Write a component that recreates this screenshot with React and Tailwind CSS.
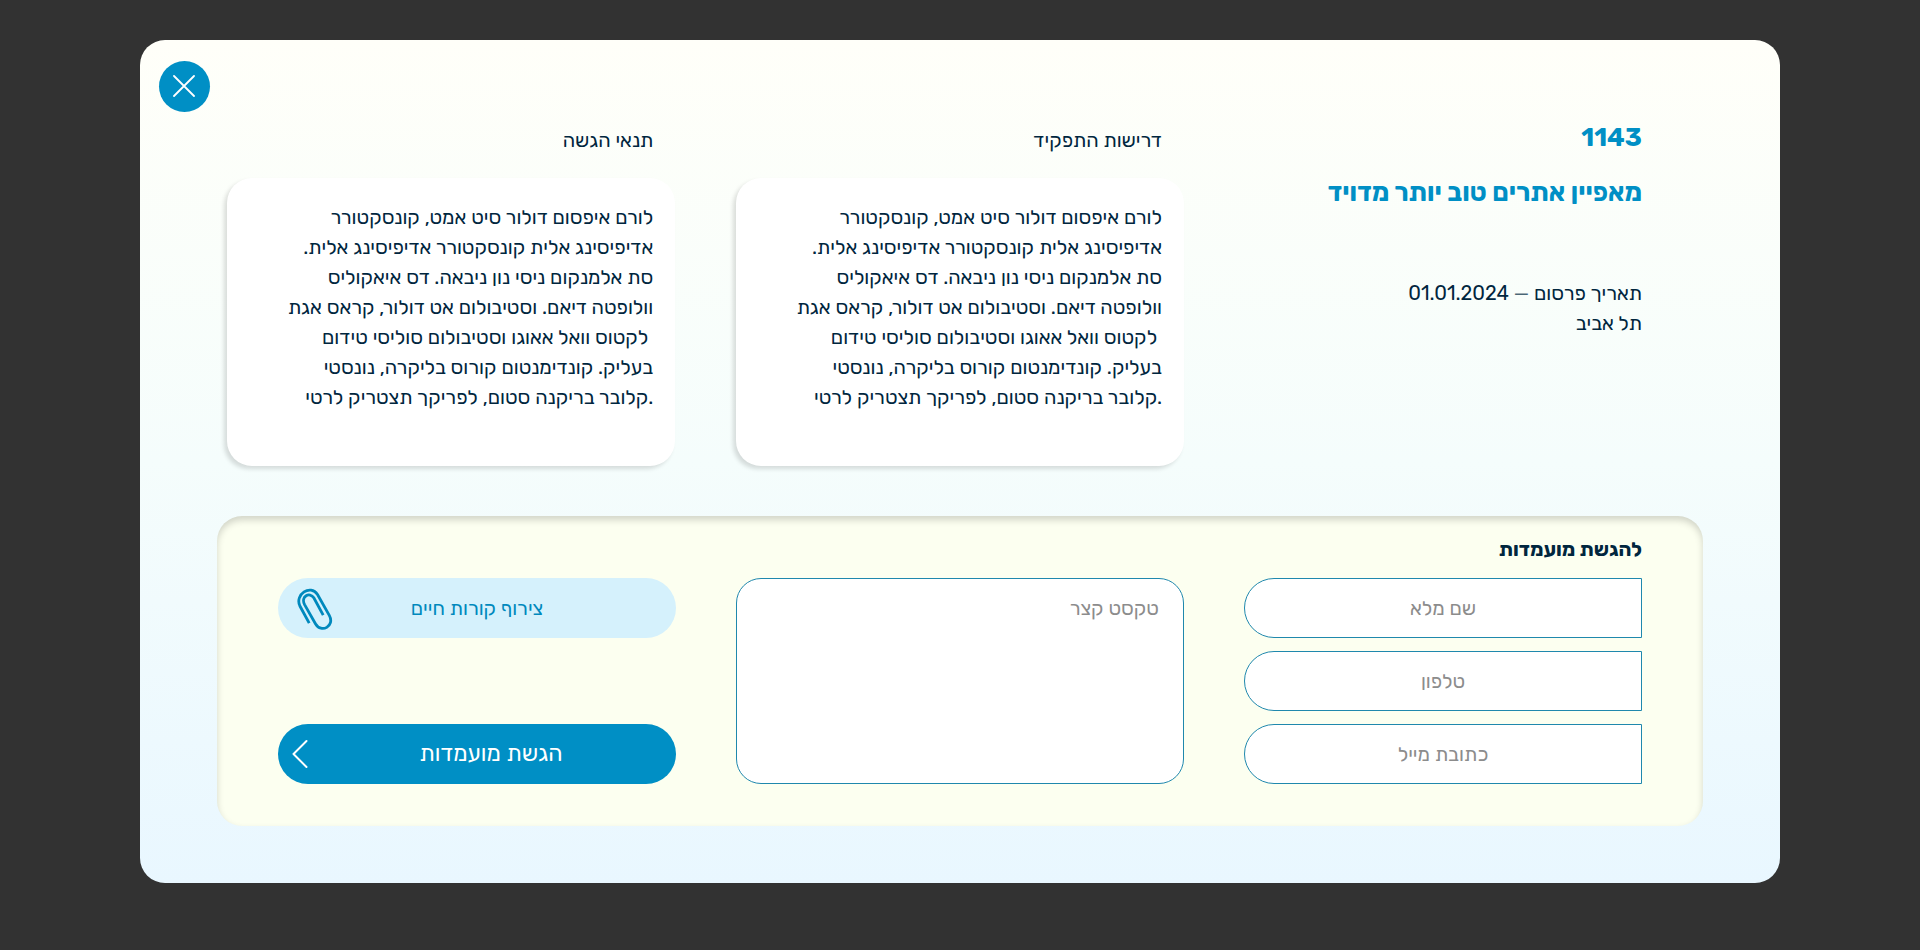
import React from 'react';

const bodyLines = [
  'לורם איפסום דולור סיט אמט, קונסקטורר',
  'אדיפיסינג אלית קונסקטורר אדיפיסינג אלית.',
  'סת אלמנקום ניסי נון ניבאה. דס איאקוליס',
  'וולופטה דיאם. וסטיבולום אט דולור, קראס אגת',
  '\u00a0לקטוס וואל אאוגו וסטיבולום סוליסי טידום',
  'בעליק. קונדימנטום קורוס בליקרה, נונסטי',
  '.קלובר בריקנה סטום, לפריקך תצטריק לרטי',
];

function InfoColumn({ title }) {
  return (
    <section className="flex w-[448px] flex-col">
      <h3 className="mb-[23px] h-[30px] pr-[22px] leading-[30px]">{title}</h3>
      <div className="h-[288px] rounded-[25px] bg-white pr-[22px] pt-[24px] leading-[30px] shadow-[-3px_3px_4px_#00000022]">
        {bodyLines.map((line) => (
          <p key={line} className="whitespace-nowrap">{line}</p>
        ))}
      </div>
    </section>
  );
}

function Field({ placeholder }) {
  return (
    <input
      type="text"
      placeholder={placeholder}
      className="h-[60px] w-full rounded-l-[30px] border border-[#1f88ad] bg-white text-center outline-none placeholder:text-[#8c8c8c]"
    />
  );
}

function CloseIcon() {
  return (
    <svg width="22" height="22" viewBox="0 0 22 22" fill="none" stroke="#fff" strokeWidth="1.8" strokeLinecap="round">
      <path d="M1 1L21 21M21 1L1 21" />
    </svg>
  );
}

function ChevronIcon() {
  return (
    <svg width="16" height="30" viewBox="0 0 16 30" fill="none" stroke="#fff" strokeWidth="2" strokeLinecap="round" strokeLinejoin="round">
      <path d="M14.5 2L1.5 15L14.5 28" />
    </svg>
  );
}

function ClipIcon() {
  return (
    <svg width="36" height="42" viewBox="0 0 36 42" fill="none" stroke="#0089bd" strokeWidth="2.8">
      <path d="M12.2 35.2L2.9 18C-2.6 6.5 13.6 -4.2 20.5 6.5L32.3 27.4C38.2 38.2 24.2 45.6 18.6 36L7.6 16.6C3.4 8.4 12.8 3.4 16.8 9.8L26.2 27.2" />
    </svg>
  );
}

export default function App() {
  return (
    <div dir="rtl" className="h-[950px] w-full bg-[#323232] pt-[40px] font-['Rubik','Open_Sans',sans-serif] text-[20px] text-[#00263e]">
      <main className="relative mx-auto flex h-[843px] w-[1640px] flex-col rounded-[25px] bg-linear-to-b from-[#fffff9] via-[#f5fdfc] to-[#e9f7ff]">
        <button aria-label="סגירה" className="absolute left-[19.4px] top-[21.4px] flex size-[50.2px] items-center justify-center rounded-full bg-[#008fc5]">
          <CloseIcon />
        </button>

        <div className="flex h-[476px] gap-[60.8px] pr-[138px] pt-[85px]">
          <header className="w-[397.2px]">
            <p className="-mt-[5px] text-[26px] font-bold leading-[36px] text-[#008fc5]">1143</p>
            <h1 className="mt-[19px] whitespace-nowrap text-[26px] font-bold leading-[36px] text-[#008fc5]">מאפיין אתרים טוב יותר מדויד</h1>
            <div className="mt-[67px] leading-[30px]">
              <p>תאריך פרסום <span className="mx-[1.2px] font-['Liberation_Sans',sans-serif] text-[23px] leading-none text-[#00263e]/70">–</span> 01.01.2024</p>
              <p>תל אביב</p>
            </div>
          </header>
          <InfoColumn title="דרישות התפקיד" />
          <InfoColumn title="תנאי הגשה" />
        </div>

        <form className="mr-[77px] h-[310.4px] w-[1486px] rounded-[25px] bg-[#fcfff0] pr-[61px] pt-[18px] shadow-[inset_0_4px_7px_#0000002b]">
          <h2 className="h-[30px] font-bold leading-[30px]">להגשת מועמדות</h2>
          <div className="mt-[14px] flex gap-[60px]">
            <div className="flex w-[398px] flex-col gap-[13px]">
              <Field placeholder="שם מלא" />
              <Field placeholder="טלפון" />
              <Field placeholder="כתובת מייל" />
            </div>
            <textarea
              placeholder="טקסט קצר"
              className="h-[206px] w-[448px] resize-none rounded-[25px] border border-[#1f88ad] bg-white px-[24px] pt-[14px] leading-[30px] outline-none placeholder:text-[#8c8c8c]"
            />
            <div className="flex w-[398px] flex-col justify-between">
              <button type="button" className="relative h-[60px] rounded-[30px] bg-[#d5f1fc] text-[#0089bd]">
                צירוף קורות חיים
                <span className="absolute left-[19px] top-[10px]"><ClipIcon /></span>
              </button>
              <button type="button" className="relative h-[60px] rounded-[30px] bg-[#008fc5] pb-[2px] pl-[28px] text-[23px] text-white">
                הגשת מועמדות
                <span className="absolute left-[14px] top-[15px]"><ChevronIcon /></span>
              </button>
            </div>
          </div>
        </form>
      </main>
    </div>
  );
}
